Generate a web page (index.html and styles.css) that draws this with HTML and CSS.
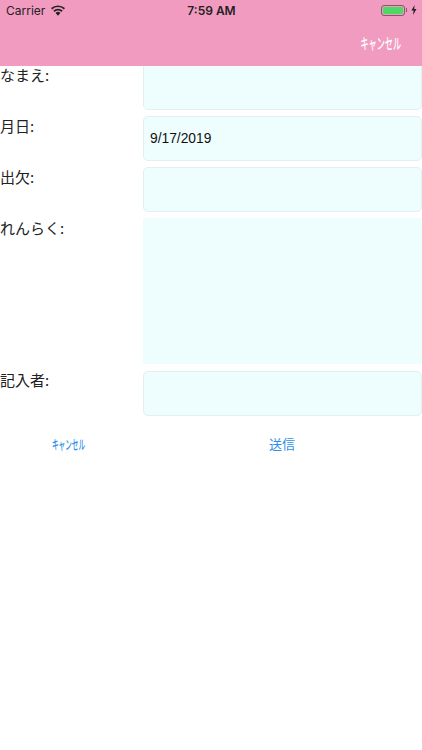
FILE: index.html
```html
<!DOCTYPE html>
<html lang="ja">
<head>
<meta charset="utf-8">
<title>フォーム</title>
<link rel="stylesheet" href="styles.css">
</head>
<body>
<header class="header">
  <div class="status">
    <div class="status-left">
      <span>Carrier</span>
      <svg class="wifi" viewBox="0 0 14 11" width="14" height="11"><path d="M7 10.8 4.6 8a3.5 3.5 0 0 1 4.8 0Z" fill="#222"/><path d="M3.6 6.9a5.2 5.2 0 0 1 6.8 0l1.3-1.4a7 7 0 0 0-9.4 0Z" fill="#222"/><path d="M1.1 4.4a8.7 8.7 0 0 1 11.8 0L14 3.1A10.4 10.4 0 0 0 0 3.1Z" fill="#222"/></svg>
    </div>
    <div class="status-time">7:59 AM</div>
    <div class="status-right">
      <span class="battery"><span class="battery-fill"></span></span>
      <span class="battery-nub"></span>
      <svg class="bolt" viewBox="0 0 6 10" width="6" height="10"><path d="M3.6 0 0.4 5.6h2.2L2 10l3.5-6H3.2Z" fill="#222"/></svg>
    </div>
  </div>
  <div class="nav"><span class="nav-cancel">キャンセル</span></div>
</header>
<main class="form">
  <div class="row row-first"><div class="label">なまえ:</div><div class="field"></div></div>
  <div class="row"><div class="label">月日:</div><div class="field field-text">9/17/2019</div></div>
  <div class="row"><div class="label">出欠:</div><div class="field"></div></div>
  <div class="row"><div class="label">れんらく:</div><div class="field field-area"></div></div>
  <div class="row row-last"><div class="label">記入者:</div><div class="field"></div></div>
</main>
<div class="actions">
  <span class="action action-cancel">キャンセル</span>
  <span class="action action-send">送信</span>
</div>
</body>
</html>
```
FILE: styles.css
```css
* { box-sizing: border-box; }
html, body { margin: 0; padding: 0; }
body {
  width: 422px;
  height: 750px;
  background: #fff;
  font-family: "Inter", "Noto Sans CJK JP", sans-serif;
  overflow: hidden;
}
.header { height: 66px; background: #f29bc1; display: flex; flex-direction: column; }
.status {
  height: 20px;
  display: grid;
  grid-template-columns: 1fr auto 1fr;
  align-items: center;
  padding: 0 5px 0 6px;
  color: #222;
  font-size: 12px;
}
.status-left { display: flex; align-items: center; gap: 6px; }
.status-time { font-weight: 600; font-size: 12px; }
.status-right { display: flex; align-items: center; justify-content: flex-end; }
.battery { width: 24px; height: 11px; border: 1px solid #7d5a6c; border-radius: 3px; padding: 1px; display: flex; }
.battery-fill { flex: 1; background: #4cd964; border-radius: 1px; }
.battery-nub { width: 1px; height: 4px; background: #7d5a6c; margin: 0 4px 0 1px; }
.nav { flex: 1; display: flex; align-items: center; justify-content: flex-end; padding: 0 21px 2px 0; }
.nav-cancel { color: #fff; font: 500 15px/1 "Noto Sans CJK JP", sans-serif; transform: scaleX(0.54); transform-origin: right center; }
.form { display: flex; flex-direction: column; gap: 6px; }
.row { display: grid; grid-template-columns: 142.5px 279.5px; }
.row-first .label { margin-top: -1px; }
.row-last { margin-top: 1px; }
.row-last .label { margin-top: -1px; }
.label { font: 15px/20px "Noto Sans CJK JP", sans-serif; color: #222; }
.field {
  height: 45px;
  background: #eefeff;
  border: 1px solid #e3eff0;
  border-radius: 5px;
}
.row-first .field { height: 44px; border-top-color: #eefeff; border-radius: 0 0 5px 5px; }
.field-text { display: flex; align-items: center; padding: 0 6.5px; font: 13.8px "Liberation Sans", sans-serif; color: #111; }
.field-area { height: 146px; border: none; border-radius: 0; }
.actions { display: grid; grid-template-columns: 137px 290px; margin-top: 19px; text-align: center; }
.action { color: #2f8fe8; font-family: "Noto Sans CJK JP", sans-serif; font-size: 13px; line-height: 18px; }
.action-cancel { font-weight: 500; transform: scaleX(0.51); }
```
